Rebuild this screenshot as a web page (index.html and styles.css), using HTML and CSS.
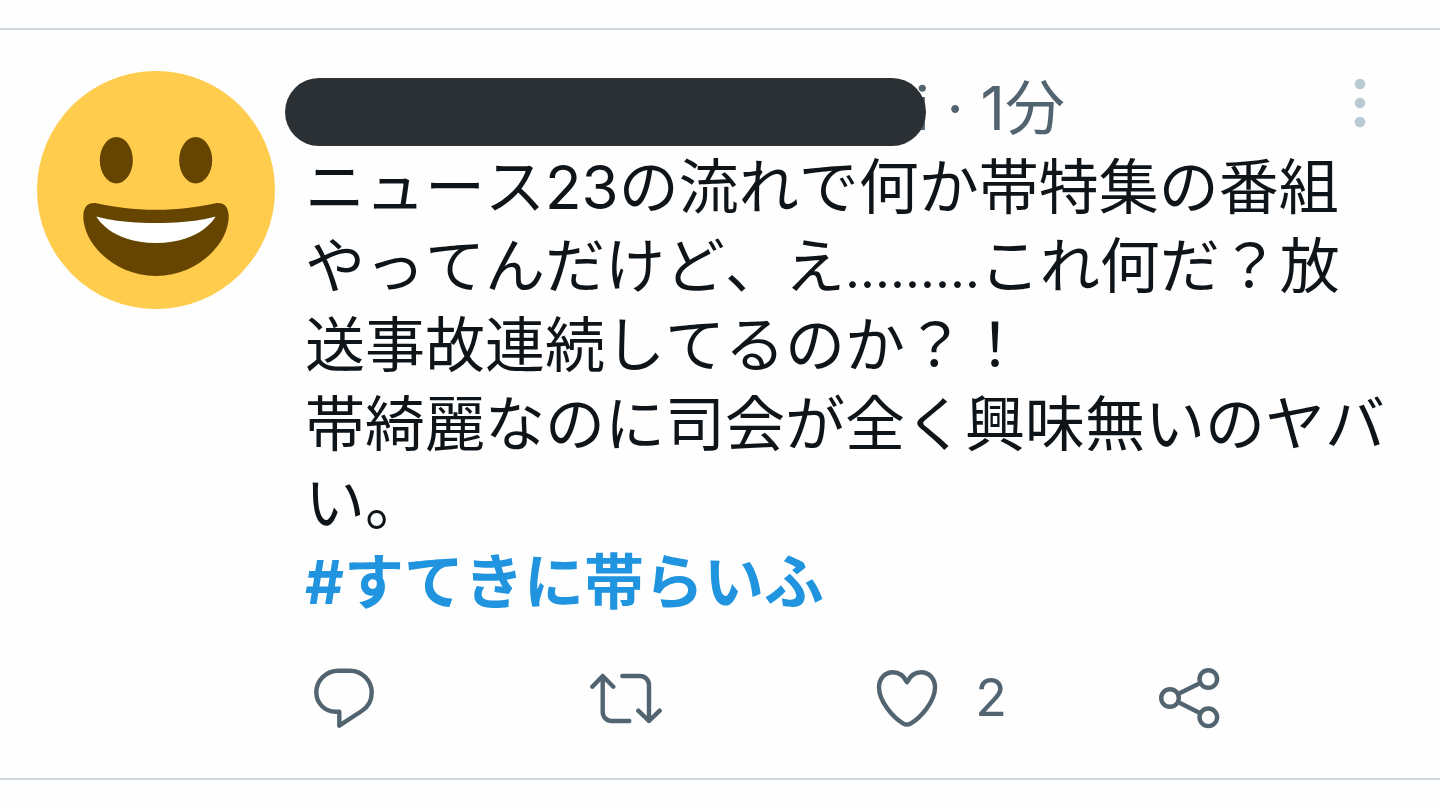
FILE: index.html
```html
<!DOCTYPE html>
<html lang="ja">
<head>
    <meta charset="UTF-8">
    <meta name="viewport" content="width=device-width, initial-scale=1.0">
    <title>ツイート</title>
    <link rel="stylesheet" href="styles.css">
</head>
<body>
    <main class="timeline">
        <article class="tweet">
            <svg class="avatar" viewBox="0 0 36 36">
                <circle fill="#FFCC4D" cx="18" cy="18" r="18"/>
                <ellipse fill="#664500" cx="12" cy="13.5" rx="2.5" ry="3.5"/>
                <ellipse fill="#664500" cx="24" cy="13.5" rx="2.5" ry="3.5"/>
                <path fill="#664500" d="M18 21c-3.623 0-6.027-.422-9-1-.679-.131-2 0-2 2 0 4 4.595 9 11 9 6.404 0 11-5 11-9 0-2-1.321-2.132-2-2-2.973.578-5.377 1-9 1z"/>
                <path fill="#FFF" d="M9 22s3 1 9 1 9-1 9-1-2 4-9 4-9-4-9-4z"/>
            </svg>

            <div class="content">
                <header class="tweet-header">
                    <span class="name-mask"></span>
                    <span class="meta">i · <time>1分</time></span>
                    <button class="menu" type="button" aria-label="メニュー">
                        <svg class="dots" viewBox="0 0 12 50">
                            <circle cx="6" cy="6" r="5.3"/>
                            <circle cx="6" cy="25" r="5.3"/>
                            <circle cx="6" cy="44" r="5.3"/>
                        </svg>
                    </button>
                </header>

                <p class="text">ニュース23の流れで何か帯特集の番組やってんだけど、え<span class="ellipsis">………</span>これ何だ？放送事故連続してるのか？！<br>帯綺麗なのに司会が全く興味無いのヤバい。<br><a class="hashtag" href="#">#すてきに帯らいふ</a></p>

                <!-- Actions -->
                <div class="actions">
                    <button class="action" type="button" aria-label="返信">
                        <svg class="icon" viewBox="0 0 72 72">
                            <path d="M30.3 8.7H42C54 8.7 63.7 18.5 63.7 30.5C63.7 38.5 60 45 53.7 49L31.3 63.7V49.7H27.7C16.5 49.5 8.3 41 8.3 30.3C8.3 18.5 18 8.7 30.3 8.7Z"/>
                        </svg>
                    </button>
                    <button class="action" type="button" aria-label="リツイート">
                        <svg class="icon" viewBox="0 0 72 72">
                            <path d="M2.3 24.7L12.7 14L23.3 24.7M12.7 14V50A9 9 0 0 0 21.7 59H39.3"/>
                            <path d="M32.3 14H50A9 9 0 0 1 59 23V59M48.3 48.7L59 59L69.7 48.7"/>
                        </svg>
                    </button>
                    <button class="action" type="button" aria-label="いいね">
                        <svg class="icon" viewBox="0 0 72 72">
                            <path d="M36 20.3C33 14 28 10.3 21.8 10.3C14 10.3 8 16.5 8 25.5C8 40 23 56 32 61.3C34.5 62.8 37.5 62.8 40 61.3C49 56 64 40 64 25.5C64 16.5 58 10.3 50.2 10.3C44 10.3 39 14 36 20.3Z"/>
                        </svg>
                        <span class="count">2</span>
                    </button>
                    <button class="action" type="button" aria-label="共有">
                        <svg class="icon" viewBox="0 0 72 72">
                            <circle cx="17" cy="36" r="8.8"/>
                            <circle cx="55.3" cy="17" r="8.8"/>
                            <circle cx="55.3" cy="55.3" r="8.8"/>
                            <path d="M25 32L47.3 21M25 40L47.3 51.3"/>
                        </svg>
                    </button>
                </div>
            </div>
        </article>
    </main>
</body>
</html>
```
FILE: styles.css
```css
* {
    margin: 0;
    padding: 0;
    box-sizing: border-box;
}

body {
    background: #fefefe;
    color: #0f1419;
    font-family: Inter, "Noto Sans CJK JP", sans-serif;
    font-size: 60px;
    font-kerning: none;
}

button {
    background: none;
    border: none;
    color: inherit;
    font: inherit;
    cursor: pointer;
}

.timeline {
    padding-top: 28px;
}

/* Tweet */
.tweet {
    display: flex;
    gap: 30px;
    padding: 41px 52px 44px 37px;
    border-top: 2px solid #cfd9de;
    border-bottom: 2px solid #cfd9de;
}

.avatar {
    flex: none;
    width: 238px;
    height: 238px;
}

.content {
    flex: 1;
    min-width: 0;
    padding-top: 7px;
}

/* Header */
.tweet-header {
    display: flex;
    align-items: flex-start;
    height: 68px;
    color: #536471;
}

.name-mask {
    position: relative;
    width: 641px;
    height: 68px;
    margin-left: -20px;
    border-radius: 34px;
    background: #2b3034;
}

.meta {
    margin-left: -11px;
    line-height: 60px;
    white-space: nowrap;
}

.menu {
    display: flex;
    margin-left: auto;
    padding: 0 22px;
}

.dots {
    width: 12px;
    height: 50px;
    fill: #b9cad3;
}

/* Text */
.text {
    padding-top: 2px;
    line-height: 79px;
}

.ellipsis {
    font-size: 52px;
    line-height: 1;
}

.hashtag {
    color: #2094de;
    font-weight: 700;
    text-decoration: none;
}

/* Actions */
.actions {
    display: grid;
    grid-template-columns: 26% 26% 26% auto;
    margin-top: 40px;
}

.action {
    display: flex;
    align-items: center;
    gap: 32px;
    padding-left: 3px;
    color: #536471;
}

.icon {
    flex: none;
    width: 72px;
    height: 72px;
    fill: none;
    stroke: currentColor;
    stroke-width: 4.4;
    stroke-linecap: round;
    stroke-linejoin: round;
}

.count {
    font-size: 52px;
    line-height: 72px;
}
```
